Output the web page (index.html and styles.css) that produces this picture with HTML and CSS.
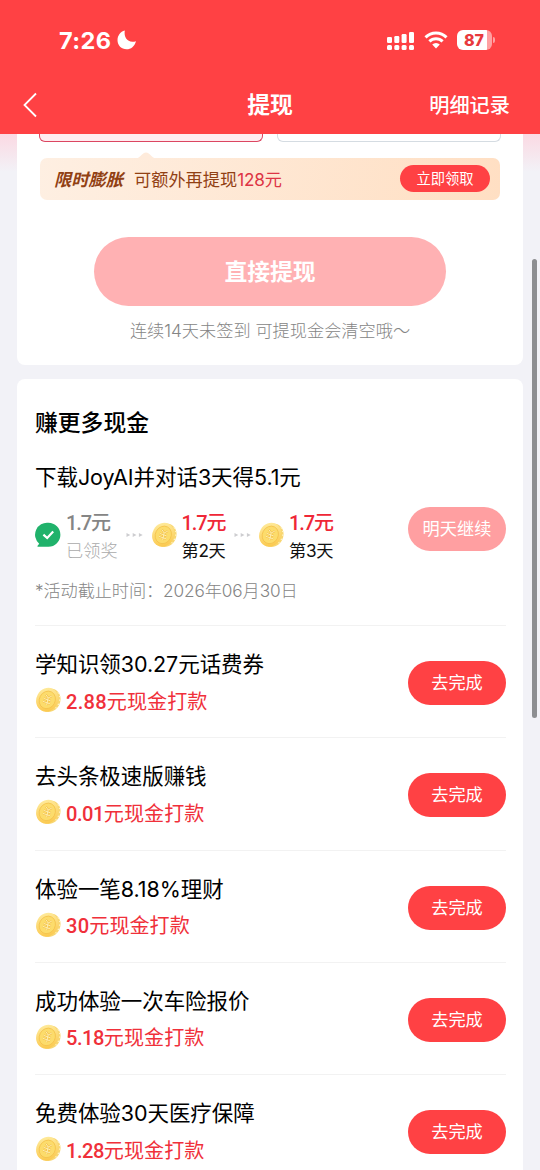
FILE: index.html
```html
<!DOCTYPE html>
<html lang="zh-CN">
<head>
<meta charset="utf-8">
<title>提现</title>
<link rel="stylesheet" href="styles.css">
</head>
<body>
<svg class="defs" width="0" height="0" aria-hidden="true">
  <defs>
    <linearGradient id="gold" x1="0" y1="0" x2=".7" y2="1"><stop offset="0" stop-color="#fff0a8"/><stop offset="1" stop-color="#fbc84d"/></linearGradient>
    <symbol id="coin" viewBox="0 0 26 26">
      <ellipse cx="14.4" cy="13.2" rx="10.9" ry="12" transform="rotate(28 14.4 13.2)" fill="#f8d671"/>
      <path d="M22.6 5.5l1.6 1M24 9.3l1.6.6M24 13.2h1.4M22.8 17l1.4.8M20.5 20.4l1.2 1.1" stroke="#fff3c4" stroke-width="1.2"/>
      <ellipse cx="12.2" cy="12.8" rx="10.8" ry="12.2" transform="rotate(28 12.2 12.8)" fill="url(#gold)"/>
      <ellipse cx="12.3" cy="12.9" rx="7.9" ry="9" transform="rotate(28 12.3 12.9)" fill="#fcdc6c" stroke="#f4c24c" stroke-width=".8"/>
      <path d="M11 7.6l2.1 3.4 3.7-1.9M13.1 11l-1.4 7M8.8 11.4l7 2.6M8 14.4l7 2.4" fill="none" stroke="#f2bb45" stroke-width="1.9"/>
      <path d="M11 7.6l2.1 3.4 3.7-1.9M13.1 11l-1.4 7M8.8 11.4l7 2.6M8 14.4l7 2.4" fill="none" stroke="#fff0b0" stroke-width="1"/>
    </symbol>
    <symbol id="dots" viewBox="0 0 17 6"><path d="M.5.9L4.3 3 .5 5.1zM6.7.9L10.5 3 6.7 5.1zM12.9.9L16.7 3l-3.8 2.1z" fill="#cdcdd0"/></symbol>
  </defs>
</svg>
<div class="screen">
  <header class="header">
    <div class="status">
      <span class="time">7:26</span>
      <svg class="moon" width="20" height="20" viewBox="0 0 20 20"><path d="M7.8.6C6.5 8.2 11.4 13.7 19 11.2 17.6 16.4 14 19.3 9.6 19.3 4.3 19.3.5 15.4.5 10.3.5 5.6 3.4 1.8 7.8.6z" fill="#fff"/></svg>
      <svg class="signal" width="28" height="19" viewBox="0 0 28 19" fill="#fff"><rect x="0" y="6" width="5" height="6" rx="1.3"/><rect x="7.3" y="5" width="5" height="7" rx="1.3"/><rect x="14.6" y="3" width="5" height="9" rx="1.3"/><rect x="22" y="1" width="5" height="11" rx="1.3"/><rect x="0" y="14" width="5" height="5" rx="1.5"/><rect x="7.3" y="14" width="5" height="5" rx="1.5"/><rect x="14.6" y="14" width="5" height="5" rx="1.5"/><rect x="22" y="14" width="5" height="5" rx="1.5"/></svg>
      <svg class="wifi" width="24" height="18" viewBox="0 0 24 18" fill="none" stroke="#fff" stroke-width="3"><path d="M1.5 6.4a15 15 0 0 1 21 0M5.4 10.4a9.4 9.4 0 0 1 13.2 0"/><path d="M8.2 13.5a5.4 5.4 0 0 1 7.6 0L12 17.5z" fill="#fff" stroke="none"/></svg>
      <span class="battery">87</span><i class="battery-tip"></i>
    </div>
    <nav class="nav">
      <svg class="back" width="14" height="26" viewBox="0 0 14 26"><path d="M13 1.5L1.5 13 13 24.5" fill="none" stroke="#fff" stroke-width="1.8"/></svg>
      <h1 class="nav-title">提现</h1>
      <span class="nav-link">明细记录</span>
    </nav>
  </header>
  <main class="content">
    <section class="card withdraw">
      <div class="options"><div class="option selected"></div><div class="option"></div></div>
      <div class="notice">
        <svg class="notice-arrow" width="24" height="7" viewBox="0 0 24 7"><path d="M0 7C6 7 8 .5 12 .5S18 7 24 7z" fill="#feebdb"/></svg>
        <strong class="notice-tag">限时膨胀</strong>
        <span class="notice-text">可额外再提现<em class="amount">128元</em></span>
        <span class="claim">立即领取</span>
      </div>
      <div class="submit">直接提现</div>
      <p class="hint">连续14天未签到 可提现金会清空哦～</p>
    </section>
    <section class="card earn">
      <h2 class="earn-title">赚更多现金</h2>
      <h3 class="task-title">下载JoyAI并对话3天得5.1元</h3>
      <div class="progress">
        <svg class="check" width="26" height="26" viewBox="0 0 26 26"><path d="M13.4.8a12 12 0 1 1 0 24H3.2c-1 0-1-1-.2-1.5l1.2-1.5A12 12 0 0 1 13.4.8z" fill="#20b26b"/><path d="M8.4 12.6l3.8 3.4 6-6.4" fill="none" stroke="#fff" stroke-width="2.2"/></svg>
        <div class="step done"><b class="step-value">1.7元</b><span class="step-day">已领奖</span></div>
        <svg class="dots"><use href="#dots"/></svg>
        <svg class="coin"><use href="#coin"/></svg>
        <div class="step"><b class="step-value">1.7元</b><span class="step-day">第2天</span></div>
        <svg class="dots"><use href="#dots"/></svg>
        <svg class="coin"><use href="#coin"/></svg>
        <div class="step"><b class="step-value">1.7元</b><span class="step-day">第3天</span></div>
        <span class="button muted">明天继续</span>
      </div>
      <p class="deadline">*活动截止时间：2026年06月30日</p>
      <ul class="tasks">
        <li class="task"><div class="task-info"><h3 class="task-title">学知识领30.27元话费券</h3><p class="reward"><svg class="coin"><use href="#coin"/></svg><span><b class="num wide">2.88</b>元现金打款</span></p></div><span class="button">去完成</span></li>
        <li class="task"><div class="task-info"><h3 class="task-title">去头条极速版赚钱</h3><p class="reward"><svg class="coin"><use href="#coin"/></svg><span><b class="num">0.01</b>元现金打款</span></p></div><span class="button">去完成</span></li>
        <li class="task"><div class="task-info"><h3 class="task-title">体验一笔8.18%理财</h3><p class="reward"><svg class="coin"><use href="#coin"/></svg><span><b class="num wide">30</b>元现金打款</span></p></div><span class="button">去完成</span></li>
        <li class="task"><div class="task-info"><h3 class="task-title">成功体验一次车险报价</h3><p class="reward"><svg class="coin"><use href="#coin"/></svg><span><b class="num">5.18</b>元现金打款</span></p></div><span class="button">去完成</span></li>
        <li class="task"><div class="task-info"><h3 class="task-title">免费体验30天医疗保障</h3><p class="reward"><svg class="coin"><use href="#coin"/></svg><span><b class="num">1.28</b>元现金打款</span></p></div><span class="button">去完成</span></li>
      </ul>
    </section>
  </main>
  <i class="scrollbar"></i>
</div>
</body>
</html>
```
FILE: styles.css
```css
* { box-sizing: border-box; margin: 0; padding: 0; }
html, body { overflow: hidden; }
body { font-family: Inter, "Noto Sans CJK SC", sans-serif; color: #111; }
i, em { font-style: normal; }
svg { display: block; flex: none; }
.defs { position: absolute; }
.screen { position: relative; width: 540px; height: 1170px; overflow: hidden; background: #f2f2f7; display: flex; flex-direction: column; }
.header { flex: none; height: 134px; background: #ff4144; color: #fff; }
.status { height: 75px; padding: 5px 45px 0 59px; display: flex; align-items: center; }
.time { font-size: 23.5px; font-weight: 700; letter-spacing: .4px; width: 58px; }
.signal { margin-left: auto; margin-right: 9px; }
.wifi { margin-right: 9px; }
.battery { width: 35px; height: 20px; border-radius: 6px; background: linear-gradient(90deg, #fff 30px, #ffa0a2 30px); color: #e8393d; font-size: 16px; font-weight: 800; line-height: 20px; text-align: center; padding-right: 1px; }
.battery-tip { width: 2px; height: 6px; margin-left: 1px; border-radius: 0 3px 3px 0; background: #ffa0a2; }
.nav { height: 59px; padding: 0 30px 0 23px; display: grid; grid-template-columns: 120px 1fr 113px; align-items: center; }
.nav-title { font-size: 22.8px; font-weight: 700; line-height: 32px; text-align: center; padding-top: 1px; }
.nav-link { font-size: 20.2px; font-weight: 500; line-height: 30px; text-align: right; white-space: nowrap; padding-top: 2px; }
.content { flex: 1; min-height: 0; padding: 0 17px; display: flex; flex-direction: column; gap: 14px; background: linear-gradient(180deg, #fbd9e3 0, #f2f2f7 38px); }
.card { flex: none; background: #fff; border-radius: 8px; }
.withdraw { height: 231px; border-radius: 0 0 8px 8px; display: flex; flex-direction: column; align-items: center; }
.options { display: flex; gap: 14px; align-self: stretch; padding: 0 22px; }
.option { flex: 1; height: 8px; border: 1px solid #d5dce2; border-top: 0; border-radius: 0 0 6px 6px; }
.option.selected { border-color: #dc4661; background: #ffecef; }
.notice { position: relative; width: 460px; height: 42px; margin-top: 16px; padding: 0 10px 1px 14px; border-radius: 7px; background: linear-gradient(100deg, #feefe2, #ffdfc3); display: flex; align-items: center; color: #914013; }
.notice-arrow { position: absolute; left: 94px; top: -6px; }
.notice-tag { font-size: 17.3px; font-style: italic; font-weight: 700; width: 80px; white-space: nowrap; }
.notice-text { font-size: 17.2px; }
.amount { color: #dd3545; letter-spacing: -.2px; }
.claim { width: 90px; height: 27px; margin-left: auto; border-radius: 14px; background: #ff4144; color: #fff; font-size: 14.3px; line-height: 27px; text-align: center; }
.submit { width: 352px; height: 69px; margin-top: 37px; border-radius: 35px; background: #ffb1b3; color: #fff; font-size: 22.8px; font-weight: 700; line-height: 70px; text-align: center; }
.hint { margin-top: 12px; font-size: 17.2px; font-weight: 300; line-height: 26px; color: #858585; white-space: nowrap; }
.earn { padding: 27px 17px 0 18px; }
.earn-title { font-size: 22.8px; font-weight: 500; line-height: 34px; color: #000; }
.task-title { font-size: 21.5px; font-weight: 400; line-height: 30px; white-space: nowrap; color: #000; letter-spacing: -.06px; }
.earn > .task-title { margin-top: 22px; }
.progress { display: flex; align-items: center; height: 56px; margin-top: 17px; }
.check, .coin { width: 26px; height: 26px; }
.check, .dots, .progress .coin { margin-top: -4px; }
.step { width: 44px; margin-left: 5px; display: flex; flex-direction: column; white-space: nowrap; }
.step.done { width: 52px; }
.step-value { font-family: Roboto, "Noto Sans CJK SC", sans-serif; font-size: 20px; font-weight: 500; line-height: 28px; letter-spacing: -1.1px; color: #ef2737; }
.step-day { font-size: 17.2px; line-height: 28px; color: #111; letter-spacing: -.3px; }
.done .step-value { color: #858585; }
.done .step-day { color: #aaa; font-weight: 300; letter-spacing: 0; }
.dots { width: 17px; height: 6px; margin-left: 8px; margin-right: 7.5px; }
.button { width: 98px; height: 44px; margin-left: auto; border-radius: 22px; background: #ff4144; color: #fff; font-size: 17.2px; line-height: 44px; text-align: center; white-space: nowrap; }
.task .button { margin-top: 1.5px; }
.button.muted { background: #ff9fa1; margin-top: -17px; }
.deadline { margin-top: 13px; font-size: 17.2px; font-weight: 300; line-height: 26px; color: #858585; letter-spacing: -.1px; }
.tasks { list-style: none; margin-top: 21px; }
.task { display: flex; align-items: center; height: 112.25px; border-top: 1px solid #f2f2f2; padding-top: 1.5px; }
.reward { display: flex; align-items: center; gap: 5px; margin-top: 8.5px; font-family: Roboto, "Noto Sans CJK SC", sans-serif; font-size: 20.1px; line-height: 28px; color: #f0303a; white-space: nowrap; }
.reward .coin { margin-top: -3px; }
.num { font-weight: 500; letter-spacing: -.5px; }
.num.wide { letter-spacing: .25px; }
.scrollbar { position: absolute; right: 3px; top: 259px; width: 5px; height: 459px; border-radius: 3px; background: #8d8e91; }
```
